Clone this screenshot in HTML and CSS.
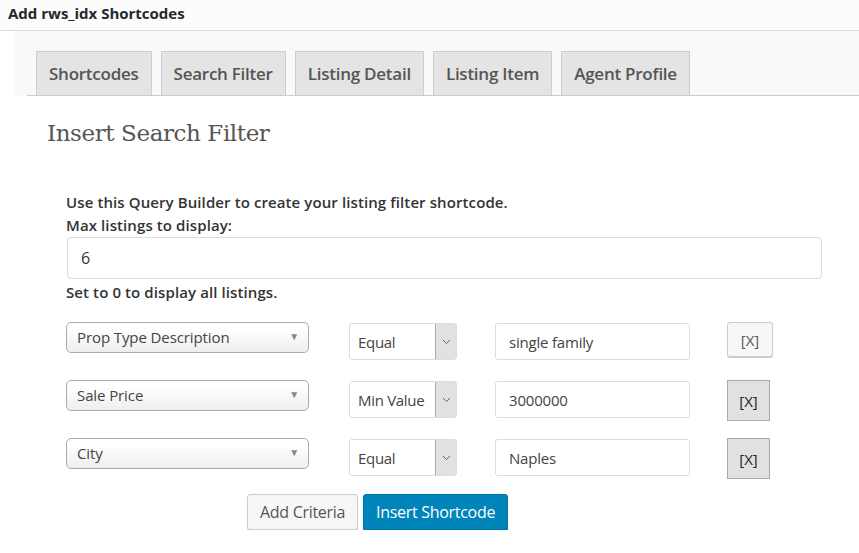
FILE: index.html
```html
<!DOCTYPE html>
<html lang="en">
<head>
  <meta charset="UTF-8">
  <title>Add rws_idx Shortcodes</title>
  <link rel="stylesheet" href="styles.css">
</head>
<body>
  <div class="titlebar">Add rws_idx Shortcodes</div>

  <div class="tabs-wrap">
    <div class="tabs">
      <a class="tab" href="#">Shortcodes</a>
      <a class="tab" href="#">Search Filter</a>
      <a class="tab" href="#">Listing Detail</a>
      <a class="tab" href="#">Listing Item</a>
      <a class="tab" href="#">Agent Profile</a>
    </div>
  </div>

  <div class="contenido">
    <h2>Insert Search Filter</h2>

    <div class="builder">
      <p class="lbl">Use this Query Builder to create your listing filter shortcode.</p>
      <p class="lbl">Max listings to display:</p>
      <div class="campo-max">6</div>
      <p class="lbl">Set to 0 to display all listings.</p>

      <div class="filas">
        <div class="fila">
          <div class="sel-campo">Prop Type Description<span class="tri">&#9660;</span></div>
          <div class="sel-op"><span class="op-txt">Equal</span><span class="op-btn"><svg width="9" height="6" viewBox="0 0 9 6"><path d="M1 1l3.5 3.5L8 1" fill="none" stroke="#666" stroke-width="1"/></svg></span></div>
          <div class="valor">single family</div>
          <div class="quitar primero">[X]</div>
        </div>

        <div class="fila">
          <div class="sel-campo">Sale Price<span class="tri">&#9660;</span></div>
          <div class="sel-op"><span class="op-txt">Min Value</span><span class="op-btn"><svg width="9" height="6" viewBox="0 0 9 6"><path d="M1 1l3.5 3.5L8 1" fill="none" stroke="#666" stroke-width="1"/></svg></span></div>
          <div class="valor">3000000</div>
          <div class="quitar">[X]</div>
        </div>

        <div class="fila">
          <div class="sel-campo">City<span class="tri">&#9660;</span></div>
          <div class="sel-op"><span class="op-txt">Equal</span><span class="op-btn"><svg width="9" height="6" viewBox="0 0 9 6"><path d="M1 1l3.5 3.5L8 1" fill="none" stroke="#666" stroke-width="1"/></svg></span></div>
          <div class="valor">Naples</div>
          <div class="quitar">[X]</div>
        </div>
      </div>

      <div class="acciones">
        <button class="btn-add">Add Criteria</button>
        <button class="btn-insert">Insert Shortcode</button>
      </div>
    </div>
  </div>
</body>
</html>
```

FILE: styles.css
```css
body {
  margin: 0;
  font-family: "Open Sans", "Noto Sans", sans-serif;
  background-color: #fff;
  color: #333;
}
.titlebar {
  height: 30px;
  line-height: 26px;
  padding-left: 8px;
  background-color: #fcfcfc;
  border-bottom: 1px solid #dddddd;
  font-size: 15px;
  font-weight: 700;
  color: #23282d;
}
.tabs-wrap {
  margin-left: 14px;
  padding-top: 20px;
  background-color: #f9f9f9;
}
.tabs {
  display: flex;
  margin-left: 13px;
  padding-left: 9px;
  border-bottom: 1px solid #cccccc;
}
.tab {
  display: block;
  height: 43px;
  line-height: 44px;
  padding: 0 12px;
  margin-right: 9px;
  background-color: #e4e4e4;
  border: 1px solid #cccccc;
  border-bottom: none;
  font-size: 17px;
  font-weight: 600;
  color: #555;
  text-decoration: none;
  letter-spacing: -0.25px;
}
.contenido {
  padding-left: 47px;
}
h2 {
  margin: 0;
  padding-top: 24px;
  font-family: "DejaVu Serif", Georgia, serif;
  font-weight: 400;
  font-size: 23px;
  color: #555;
  letter-spacing: -0.4px;
}
.builder {
  padding-left: 19px;
  padding-top: 45px;
  width: 756px;
}
.lbl {
  margin: 0;
  font-size: 15px;
  font-weight: 600;
  line-height: 23px;
  color: #333;
  letter-spacing: 0.1px;
}
.campo-max {
  height: 40px;
  line-height: 40px;
  margin: 0 0 2px 1px;
  padding-left: 13px;
  border: 1px solid #dddddd;
  border-radius: 4px;
  font-size: 16px;
  color: #333;
}
.filas {
  margin-top: 18px;
}
.fila {
  display: flex;
  align-items: flex-start;
  height: 58px;
}
.sel-campo {
  position: relative;
  width: 231px;
  height: 29px;
  line-height: 29px;
  padding-left: 10px;
  border: 1px solid #aaaaaa;
  border-radius: 5px;
  background: linear-gradient(#ffffff 20%, #eeeeee 100%);
  font-size: 15px;
  color: #444;
  letter-spacing: -0.1px;
}
.tri {
  position: absolute;
  right: 9px;
  top: -1px;
  font-size: 10px;
  color: #888;
}
.sel-op {
  display: flex;
  width: 106px;
  height: 35px;
  margin: 1px 0 0 40px;
  border: 1px solid #dddddd;
  border-radius: 3px;
  overflow: hidden;
}
.op-txt {
  flex: 1;
  padding-left: 8px;
  line-height: 37px;
  font-size: 15px;
  color: #444;
  letter-spacing: -0.3px;
}
.op-btn {
  width: 20px;
  display: flex;
  align-items: center;
  justify-content: center;
  background-color: #e1e1e1;
  border-left: 1px solid #aaaaaa;
}
.valor {
  width: 180px;
  height: 35px;
  line-height: 37px;
  margin: 1px 0 0 38px;
  padding-left: 13px;
  border: 1px solid #dddddd;
  border-radius: 3px;
  font-size: 15px;
  color: #444;
  letter-spacing: -0.2px;
}
.quitar {
  width: 41px;
  height: 39px;
  line-height: 40px;
  margin-left: 37px;
  text-align: center;
  background-color: #e1e1e1;
  border: 1px solid #aaaaaa;
  font-size: 15px;
  color: #222;
}
.quitar.primero {
  width: 44px;
  height: 33px;
  line-height: 34px;
  background-color: #f7f7f7;
  border-color: #cccccc;
  border-radius: 3px;
  box-shadow: 0 1px 0 #cccccc;
  color: #555;
}
.acciones {
  display: flex;
  gap: 5px;
  margin-left: 181px;
  margin-top: -2px;
}
.acciones button {
  height: 36px;
  padding: 0 12px;
  border-radius: 3px;
  font-family: "Open Sans", "Noto Sans", sans-serif;
  font-size: 16px;
  letter-spacing: -0.3px;
  cursor: pointer;
}
.btn-add {
  background-color: #f7f7f7;
  border: 1px solid #cccccc;
  box-shadow: 0 1px 0 #cccccc;
  color: #555;
}
.btn-insert {
  background-color: #0085ba;
  border: 1px solid #0073aa;
  box-shadow: 0 1px 0 #006799;
  color: #fff;
}
```
